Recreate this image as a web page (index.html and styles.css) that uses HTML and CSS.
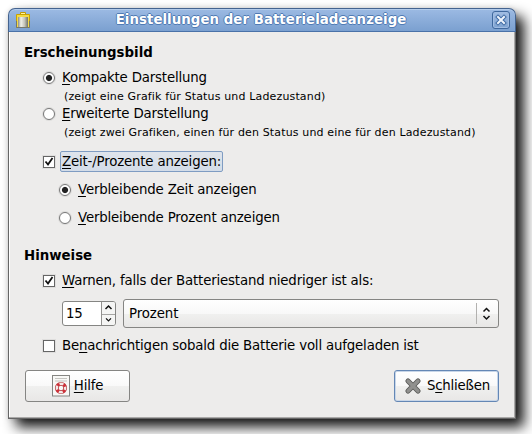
FILE: index.html
```html
<!DOCTYPE html>
<html lang="de">
<head>
<meta charset="utf-8">
<title>Einstellungen der Batterieladeanzeige</title>
<link rel="stylesheet" href="styles.css">
</head>
<body>
<main class="window">
  <header class="titlebar">
    <svg class="app-icon" width="14" height="18" viewBox="0 0 14 18">
      <defs>
        <linearGradient id="cell"><stop offset="0" stop-color="#8c8e84"/><stop offset=".3" stop-color="#f0f0e8"/><stop offset=".65" stop-color="#c5c4b9"/><stop offset="1" stop-color="#707369"/></linearGradient>
      </defs>
      <path d="M4.5 4V1.5h5V4" fill="#fff3a0" stroke="#c49b00"/>
      <path d="M.5 3.5h13v13H.5z" fill="#f5dc45" stroke="#c8a200"/>
      <path d="M2 6h10v10H2z" fill="url(#cell)"/>
      <path d="M.5 10v6.5h13V10" fill="none" stroke="#77786a"/>
    </svg>
    <h1 class="title">Einstellungen der Batterieladeanzeige</h1>
    <button class="close" aria-label="Schließen">
      <svg width="18" height="18" viewBox="0 0 18 18">
        <path d="M6 6l6 6M12 6l-6 6" stroke="#3f6ba4" stroke-width="4" stroke-linecap="square"/>
        <path d="M6 6l6 6M12 6l-6 6" stroke="#eef4fc" stroke-width="2" stroke-linecap="square"/>
      </svg>
    </button>
  </header>
  <div class="content">
    <h2 class="heading">Erscheinungsbild</h2>
    <label class="row first"><span class="radio on"></span><span class="label"><u>K</u>ompakte Darstellung</span></label>
    <p class="hint">(zeigt eine Grafik für Status und Ladezustand)</p>
    <label class="row tight"><span class="radio"></span><span class="label"><u>E</u>rweiterte Darstellung</span></label>
    <p class="hint">(zeigt zwei Grafiken, einen für den Status und eine für den Ladezustand)</p>
    <label class="row show"><span class="check on"><svg width="12" height="12" viewBox="0 0 12 12"><path d="M2.5 5.5l2.5 3 4.5-6.5" /></svg></span><span class="label focused"><u>Z</u>eit-/Prozente anzeigen:</span></label>
    <label class="row sub time"><span class="radio on"></span><span class="label"><u>V</u>erbleibende Zeit anzeigen</span></label>
    <label class="row sub percent"><span class="radio"></span><span class="label"><u>V</u>erbleibende Prozent anzeigen</span></label>
    <h2 class="heading second">Hinweise</h2>
    <label class="row warn"><span class="check on"><svg width="12" height="12" viewBox="0 0 12 12"><path d="M2.5 5.5l2.5 3 4.5-6.5" /></svg></span><span class="label"><u>W</u>arnen, falls der Batteriestand niedriger ist als:</span></label>
    <div class="controls">
      <div class="spinner">
        <span class="value">15</span>
        <span class="arrows">
          <svg width="13" height="12" viewBox="0 0 13 12"><path d="M3.5 7l3-3 3 3"/></svg>
          <svg class="down" width="13" height="12" viewBox="0 0 13 12"><path d="M3.5 4l3 3 3-3"/></svg>
        </span>
      </div>
      <div class="combo">
        <span>Prozent</span>
        <svg width="21" height="23" viewBox="0 0 21 23"><path class="line" d="M.5 1v21"/><path d="M7.5 9.5l3-3 3 3M7.5 14l3 3 3-3"/></svg>
      </div>
    </div>
    <label class="row full"><span class="check"></span><span class="label">Be<u>n</u>achrichtigen sobald die Batterie voll aufgeladen ist</span></label>
    <footer class="buttons">
      <button class="button">
        <svg width="18" height="22" viewBox="0 0 18 22">
          <rect x=".5" y=".5" width="17" height="20.5" fill="#f8f8f6" stroke="#858582"/>
          <path d="M3 3.5h12M3 6h12" stroke="#c4c4c0"/>
          <circle cx="9" cy="13" r="4.2" fill="none" stroke="#b33b40" stroke-width="3.8"/>
          <circle cx="9" cy="13" r="4.2" fill="none" stroke="#f3e9e7" stroke-width="2.4"/>
          <circle cx="9" cy="13" r="4.2" fill="none" stroke="#ce3038" stroke-width="3" stroke-dasharray="2.6 4" stroke-dashoffset="-2"/>
        </svg>
        <span><u>H</u>ilfe</span>
      </button>
      <button class="button dismiss">
        <svg width="20" height="20" viewBox="0 0 20 20">
          <path d="M5 5l10 10M15 5l-10 10" stroke="#5c5c5a" stroke-width="5.2" stroke-linecap="round"/>
          <path d="M5 5l10 10M15 5l-10 10" stroke="#90908e" stroke-width="3.3" stroke-linecap="round"/>
        </svg>
        <span>S<u>c</u>hließen</span>
      </button>
    </footer>
  </div>
</main>
</body>
</html>
```
FILE: styles.css
```css
* { box-sizing: border-box; }
body {
  margin: 0;
  padding: 8px;
  height: 434px;
  overflow: hidden;
  background: #fff;
  color: #000;
  font: 13.33px/20px "DejaVu Sans", sans-serif;
}
h1, h2, p { margin: 0; }
u { text-decoration-thickness: 1px; text-underline-offset: 2px; text-decoration-skip-ink: none; }
button { font: inherit; color: inherit; padding: 0; }
.window {
  width: 508px;
  height: 411px;
  border-radius: 7px 7px 0 0;
  background: #edeceb;
  box-shadow: 8px 8px 13px rgba(0, 0, 0, .92), 0 0 5px rgba(0, 0, 0, .12);
}
.titlebar {
  display: flex;
  align-items: center;
  height: 24px;
  padding: 0 5px 0 7px;
  border: 1px solid #44638f;
  border-bottom-color: #4a72a8;
  border-radius: 7px 7px 0 0;
  background: linear-gradient(#9cbae3, #7ba0d0);
  box-shadow: inset 0 1px #b5cdec;
}
.app-icon { flex: none; }
.title {
  flex: 1;
  text-align: center;
  color: #fff;
  font-size: 13.33px;
  font-weight: bold;
  line-height: 20px;
  letter-spacing: .05px;
  white-space: nowrap;
  text-shadow: 1px 0 #507bb4, -1px 0 #507bb4, 0 1px #507bb4, 0 -1px #507bb4;
}
.close {
  width: 18px;
  height: 18px;
  border: 1px solid #3f689d;
  border-radius: 3px;
  background: linear-gradient(#a0bce2, #7fa3d1);
  box-shadow: inset 0 0 0 1px #a0bce2;
}
.close svg { display: block; margin: -1px; }
.content {
  height: 387px;
  padding: 11px 16px 0 15px;
  border: 1px solid #666;
  border-top: 0;
  box-shadow: inset -1px -1px #aaa9a8, inset 1px 0 #fff;
}
.heading { font-size: 13.33px; font-weight: bold; line-height: 20px; }
.second { margin-top: 18px; }
.row { display: flex; align-items: center; height: 20px; padding-left: 19px; white-space: nowrap; }
.label { margin-left: 7px; letter-spacing: -.17px; }
.first { margin-top: 5px; }
.tight { height: 16px; margin-bottom: 2px; }
.show { height: 21px; margin-top: 9px; }
.sub { padding-left: 35px; }
.time { margin-top: 8px; }
.percent { margin-top: 8px; }
.warn { margin-top: 5px; }
.full { margin-top: 8px; }
.hint { height: 18px; padding-left: 40px; font-size: 11px; letter-spacing: .15px; line-height: 18px; white-space: nowrap; }
.radio {
  width: 12px;
  height: 12px;
  border: 1px solid #777;
  border-radius: 50%;
  background: #fff;
  box-shadow: 0 0 0 1px #dcdbda;
}
.radio.on { background: radial-gradient(circle, #222 0 2.6px, #fff 3.6px); }
.check { width: 12px; height: 12px; border: 1px solid #666; background: #fff; box-shadow: 0 0 0 1px #dfdedd; }
.check svg { display: block; margin: -1px; fill: none; stroke: #111; stroke-width: 1.8; }
.focused {
  width: 163px;
  height: 21px;
  margin-left: 5px;
  padding-left: 1px;
  border: 1px solid #7f9cc2;
  border-radius: 2px;
  background: linear-gradient(#dfe4eb, #d3dce8);
  line-height: 19px;
}
.controls { display: flex; gap: 7px; height: 29px; margin-top: 8px; padding-left: 38px; }
.spinner {
  display: flex;
  width: 54px;
  height: 25px;
  margin-top: 2px;
  border: 1px solid #858583;
  border-radius: 3px;
  background: #fff;
}
.value { width: 39px; padding-left: 3px; line-height: 23px; letter-spacing: -.3px; }
.arrows { display: flex; flex-direction: column; border-left: 1px solid #92918f; background: #f5f5f4; border-radius: 0 2px 2px 0; }
.arrows svg, .combo svg { display: block; fill: none; stroke: #111; stroke-width: 1.5; }
.arrows .down { height: 11px; border-top: 1px solid #a6a5a3; }
.combo {
  display: flex;
  flex: 1;
  align-items: center;
  justify-content: space-between;
  padding: 0 1px 0 5px;
  border: 1px solid #858583;
  border-radius: 3px;
  letter-spacing: -.1px;
  background: linear-gradient(#fff, #f8f8f8 50%, #f0f0ef 51%, #e8e7e6);
}
.combo .line { stroke: #b2b1af; stroke-width: 1; }
.buttons { display: flex; justify-content: space-between; margin-top: 14px; padding-left: 1px; }
.button {
  display: flex;
  align-items: center;
  justify-content: center;
  gap: 4px;
  width: 105px;
  height: 32px;
  border: 1px solid #858583;
  border-radius: 3px;
  background: linear-gradient(#fff, #f9f9f9 50%, #f0f0ef 51%, #e8e7e6);
}
.button span { letter-spacing: -.2px; }
.dismiss { border-color: #6487b5; box-shadow: inset 0 0 0 1px #c8d6e8; }
```
